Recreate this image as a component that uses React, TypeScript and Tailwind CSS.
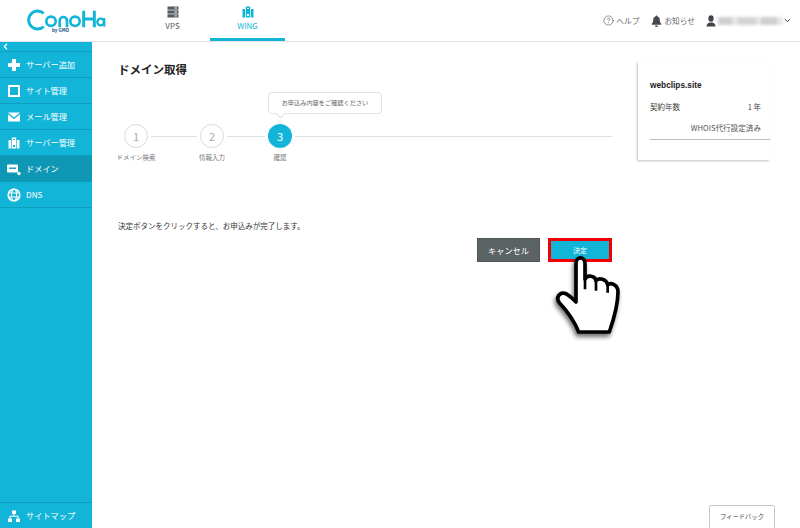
import { ReactNode } from 'react';
import { ChevronDown, ChevronLeft, CircleHelp } from 'lucide-react';

function Logo() {
  return (
    <svg width="80" height="28" viewBox="0 0 240 84" className="text-[#12b5d8]">
      <g fill="none" stroke="currentColor" strokeWidth="8">
        <path d="M 50 16 A 27 27 0 1 0 50 56" strokeWidth="9" />
        <circle cx="72" cy="40" r="14" />
        <path d="M 98 58 V 38 A 11 11 0 0 1 120 38 V 58" />
        <circle cx="144" cy="40" r="14" />
        <path d="M 170 8 V 58 M 202 8 V 58 M 170 33 H 202" strokeWidth="9" />
        <circle cx="221" cy="42" r="10" strokeWidth="7" />
        <path d="M 232 30 V 56" strokeWidth="6" />
      </g>
    </svg>
  );
}

function ServerIcon() {
  return (
    <svg width="12" height="12" viewBox="0 0 12 12" fill="#555b60">
      <rect x="0.5" y="0.5" width="11" height="3.2" />
      <rect x="0.5" y="4.4" width="11" height="3.2" />
      <rect x="0.5" y="8.3" width="11" height="3.2" />
      <rect x="7.5" y="1.5" width="2.5" height="1" fill="#fff" />
      <rect x="7.5" y="5.5" width="2.5" height="1" fill="#fff" />
      <rect x="7.5" y="9.4" width="2.5" height="1" fill="#fff" />
    </svg>
  );
}

function WingIcon({ color, hole }: { color: string; hole: string }) {
  return (
    <svg width="12" height="12" viewBox="0 0 12 12" fill={color}>
      <rect x="0.5" y="3" width="2.6" height="8.5" />
      <rect x="3.8" y="0.5" width="4.4" height="11" />
      <rect x="8.9" y="3" width="2.6" height="8.5" />
      <rect x="5" y="2" width="2" height="1" fill={hole} />
      <rect x="5" y="8" width="2" height="2" fill={hole} />
    </svg>
  );
}

function PlusIcon() {
  return (
    <svg width="14" height="14" viewBox="0 0 14 14" fill="#fff">
      <rect x="5" y="1" width="4" height="12" />
      <rect x="1" y="5" width="12" height="4" />
    </svg>
  );
}

function SquareIcon() {
  return (
    <svg width="14" height="14" viewBox="0 0 14 14" fill="none" stroke="#fff" strokeWidth="2">
      <rect x="2" y="2" width="10" height="10" />
    </svg>
  );
}

function MailIcon() {
  return (
    <svg width="14" height="14" viewBox="0 0 14 14" fill="#fff">
      <path d="M1 2.5h12L7 7.5z" />
      <path d="M1 4.2v7.3h12V4.2L7 9.2z" />
    </svg>
  );
}

function DomainIcon() {
  return (
    <svg width="16" height="14" viewBox="0 0 16 14" fill="#fff">
      <rect x="1" y="2.5" width="11" height="8" rx="1" />
      <rect x="3" y="5.5" width="7" height="1.4" fill="#0f98b5" />
      <circle cx="13" cy="11.5" r="1.7" />
    </svg>
  );
}

function GlobeIcon() {
  return (
    <svg width="14" height="14" viewBox="0 0 14 14" fill="none" stroke="#fff" strokeWidth="1.2">
      <circle cx="7" cy="7" r="5.8" strokeWidth="1.6" />
      <ellipse cx="7" cy="7" rx="2.6" ry="5.8" />
      <path d="M1.5 5h11M1.5 9h11" />
    </svg>
  );
}

function SitemapIcon() {
  return (
    <svg width="14" height="14" viewBox="0 0 14 14" fill="#fff">
      <rect x="5" y="1.5" width="4" height="3.5" />
      <rect x="1" y="9.5" width="4" height="3.5" />
      <rect x="9" y="9.5" width="4" height="3.5" />
      <path d="M6.5 5h1v1.8H11.5V9.5h-1V7.8h-7v1.7h-1V6.8H6.5z" />
    </svg>
  );
}

function BellIcon() {
  return (
    <svg width="11" height="12" viewBox="0 0 11 12" fill="#444a50">
      <path d="M5.5 0.5c.6 0 1 .4 1 .9 1.6.4 2.3 1.7 2.3 3.4 0 2 .5 3 1.5 4v.9H.7v-.9c1-1 1.5-2 1.5-4 0-1.7.7-3 2.3-3.4 0-.5.4-.9 1-.9z" />
      <path d="M4 10.5h3a1.5 1.5 0 0 1-3 0z" />
    </svg>
  );
}

function UserIcon() {
  return (
    <svg width="11" height="12" viewBox="0 0 11 12" fill="#3f454a">
      <ellipse cx="5" cy="3.5" rx="2.6" ry="3.2" />
      <path d="M0.5 11.5c0-2.6 1.6-3.6 3-4.1h3c1.4.5 3 1.5 3 4.1z" />
    </svg>
  );
}

function HandCursor() {
  return (
    <svg
      width="160"
      height="120"
      viewBox="0 0 480 360"
      className="absolute left-[-78px] top-[-8px] pointer-events-none"
    >
      <defs>
        <filter id="hand-shadow" x="-30%" y="-30%" width="160%" height="160%">
          <feDropShadow dx="-4" dy="10" stdDeviation="7" floodColor="#000" floodOpacity="0.55" />
        </filter>
      </defs>
      <path
        d="M318 195 V100 C318 78 345 78 345 100 V148 C352 132 376 138 378 152 C386 142 410 146 413 165 C422 155 444 165 444 185 C444 225 432 265 418 306 H326 C316 280 298 250 268 218 C256 204 268 186 284 190 C296 194 308 206 318 216 Z"
        fill="#fff"
        stroke="#000"
        strokeWidth="11"
        strokeLinejoin="round"
        filter="url(#hand-shadow)"
      />
      <path d="M345 145 V178 M378 152 V182 M413 165 V188" stroke="#000" strokeWidth="8" fill="none" />
    </svg>
  );
}

function NavTab({ icon, label, active }: { icon: ReactNode; label: string; active?: boolean }) {
  return (
    <div
      className={`w-[75px] h-[41px] flex flex-col items-center pt-[6px] ${
        active ? 'border-b-[3px] border-[#12b5d8] text-[#12b5d8]' : 'text-[#555b60]'
      }`}
    >
      {icon}
      <span className="text-[8px] leading-[10px] mt-[3px]">{label}</span>
    </div>
  );
}

function SideItem({ icon, label, active }: { icon: ReactNode; label: string; active?: boolean }) {
  return (
    <div
      className={`h-[26px] flex items-center border-b border-[#0f9fbe] ${active ? 'bg-[#0f98b5]' : ''}`}
    >
      <span className="w-[26px] flex justify-center pl-[1px] shrink-0">{icon}</span>
      <span className="text-[8.2px] text-white">{label}</span>
    </div>
  );
}

function Step({ n, label, active }: { n: number; label: string; active?: boolean }) {
  return (
    <div className="relative w-[24px] h-[24px] shrink-0">
      <div
        className={`w-[24px] h-[24px] rounded-full flex items-center justify-center text-[11px] ${
          active ? 'bg-[#12b5d8] text-white' : 'border border-[#dcdcdc] text-[#aaaaaa]'
        }`}
      >
        {n}
      </div>
      <span className="absolute top-[29px] left-1/2 -translate-x-1/2 whitespace-nowrap text-[6.5px] leading-[9px] text-[#777]">
        {label}
      </span>
    </div>
  );
}

export default function App() {
  return (
    <div className="relative h-screen w-[800px] overflow-hidden bg-white font-['Noto_Sans_CJK_JP','Liberation_Sans',sans-serif] text-[#333]">
      <header className="h-[42px] flex items-center border-b border-[#e3e3e3]">
        <div className="w-[135px] pl-[27px] pt-[8px] relative h-full">
          <Logo />
          <span className="absolute left-[52px] top-[27px] text-[4.5px] leading-[6px] font-bold text-[#12508c]">
            by GMO
          </span>
        </div>
        <div className="flex self-start">
          <NavTab icon={<ServerIcon />} label="VPS" />
          <NavTab active icon={<WingIcon color="#12b5d8" hole="#fff" />} label="WING" />
        </div>
        <div className="ml-auto flex items-center pr-[8px] text-[7.7px] text-[#666]">
          <CircleHelp size={11} strokeWidth={1.3} className="text-[#444a50] mr-[2px]" />
          <span className="mr-[12px]">ヘルプ</span>
          <BellIcon />
          <span className="ml-[2px] mr-[11px]">お知らせ</span>
          <UserIcon />
          <div className="w-[65px] h-[8px] ml-[1px] flex blur-[1.5px] bg-[#e6e6e6]">
            <span className="w-[14px] bg-[#cfcfcf]" />
            <span className="w-[6px]" />
            <span className="w-[18px] bg-[#d4d4d4]" />
            <span className="w-[5px]" />
            <span className="w-[16px] bg-[#cfcfcf]" />
          </div>
          <ChevronDown size={9} strokeWidth={2.5} className="text-[#333]" />
        </div>
      </header>

      <div className="flex h-[486px]">
        <aside className="w-[92px] shrink-0 flex flex-col bg-[#12b5d8]">
          <div className="h-[10px] border-b border-[#0f9fbe] flex items-center pl-[1px]">
            <ChevronLeft size={9} strokeWidth={3.5} className="text-white" />
          </div>
          <SideItem icon={<PlusIcon />} label="サーバー追加" />
          <SideItem icon={<SquareIcon />} label="サイト管理" />
          <SideItem icon={<MailIcon />} label="メール管理" />
          <SideItem icon={<WingIcon color="#fff" hole="#12b5d8" />} label="サーバー管理" />
          <SideItem active icon={<DomainIcon />} label="ドメイン" />
          <SideItem icon={<GlobeIcon />} label="DNS" />
          <div className="mt-auto h-[26px] flex items-center border-t border-[#0f9fbe]">
            <span className="w-[26px] flex justify-center pl-[1px] shrink-0">
              <SitemapIcon />
            </span>
            <span className="text-[8.2px] text-white">サイトマップ</span>
          </div>
        </aside>

        <main className="flex-1 flex pl-[26px] pr-[30px]">
          <section className="w-[494px] shrink-0">
            <h1 className="mt-[18px] text-[11.5px] leading-[18px] font-bold text-[#222]">ドメイン取得</h1>

            <div className="relative mt-[14px] h-[60px]">
              <div className="absolute left-[150px] top-[0px] w-[114px] h-[22px] rounded-[4px] border border-[#e3e3e3] bg-white flex items-center justify-center text-[6.2px] text-[#666]">
                お申込み内容をご確認ください
                <span className="absolute left-[8px] bottom-[-4px] w-[7px] h-[7px] rotate-45 bg-white border-r border-b border-[#e3e3e3]" />
              </div>
              <div className="absolute left-[6px] right-0 top-[32px] flex items-center">
                <Step n={1} label="ドメイン検索" />
                <div className="w-[46px] h-px bg-[#e0e0e0] mx-[3px]" />
                <Step n={2} label="情報入力" />
                <div className="w-[38px] h-px bg-[#e0e0e0] mx-[3px]" />
                <Step n={3} label="確認" active />
                <div className="flex-1 h-px bg-[#e0e0e0] ml-[3px]" />
              </div>
            </div>

            <p className="mt-[68px] text-[7.5px] leading-[12px] text-[#333]">
              決定ボタンをクリックすると、お申込みが完了します。
            </p>

            <div className="mt-[6px] flex justify-end gap-[8px]">
              <button className="block w-[63px] h-[24px] bg-[#5a6264] border border-[#4e5557] text-white text-[8.2px]">
                キャンセル
              </button>
              <div className="relative">
                <button className="block w-[64px] h-[24px] bg-[#12b5d8] border-[3px] border-[#f00000] text-white text-[7px]">
                  決定
                </button>
                <HandCursor />
              </div>
            </div>
          </section>

          <aside className="ml-[26px] mt-[20px] w-[132px] h-[98px] pl-[12px] shadow-[-1px_1px_2px_rgba(0,0,0,0.25)]">
            <div className="h-[78px] pt-[16px] border-b border-[#bbbbbb]">
              <div className="text-[8.3px] leading-[14px] font-bold text-[#222] font-['Liberation_Sans',sans-serif]">
                webclips.site
              </div>
              <div className="mt-[8px] flex justify-between text-[7.5px] leading-[13px] text-[#444] pr-[9px]">
                <span>契約年数</span>
                <span>1 年</span>
              </div>
              <div className="mt-[9px] text-right text-[7.6px] leading-[12px] text-[#555] pr-[9px] whitespace-nowrap">
                WHOIS代行設定済み
              </div>
            </div>
          </aside>
        </main>
      </div>

      <div className="absolute left-[709px] top-[505px] w-[66px] h-[24px] border border-[#c8c8c8] rounded-t-[2px] bg-white flex items-center justify-center text-[6.3px] text-[#444]">
        フィードバック
      </div>
    </div>
  );
}
